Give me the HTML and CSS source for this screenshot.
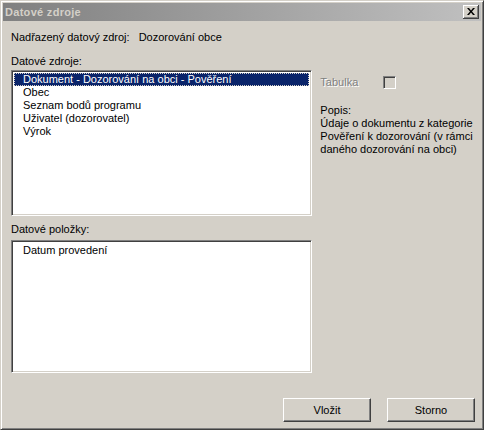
FILE: index.html
```html
<!DOCTYPE html>
<html lang="cs">

<head>
    <meta charset="UTF-8">
    <title>Datové zdroje</title>
    <link rel="stylesheet" href="styles.css">
</head>

<body>
    <div class="window">
        <div class="titlebar">
            <span class="title">Datové zdroje</span>
            <button class="close">
                <svg width="8" height="7" viewBox="0 0 8 7">
                    <path d="M0 0h2l2 2.5 2-2.5h2l-3 3.5 3 3.5h-2l-2-2.5-2 2.5h-2l3-3.5z" fill="#000" />
                </svg>
            </button>
        </div>
        <div class="content">
            <div class="parent">
                <span>Nadřazený datový zdroj:</span>
                <span class="parent-name">Dozorování obce</span>
            </div>
            <div class="main">
                <div class="left">
                    <div class="label">Datové zdroje:</div>
                    <div class="listbox sources">
                        <div class="item selected">Dokument - Dozorování na obci - Pověření</div>
                        <div class="item">Obec</div>
                        <div class="item">Seznam bodů programu</div>
                        <div class="item">Uživatel (dozorovatel)</div>
                        <div class="item">Výrok</div>
                    </div>
                    <div class="label second">Datové položky:</div>
                    <div class="listbox fields">
                        <div class="item">Datum provedení</div>
                    </div>
                </div>
                <div class="right">
                    <div class="table-row">
                        <span class="disabled">Tabulka</span>
                        <span class="checkbox"></span>
                    </div>
                    <div class="desc">
                        <div>Popis:</div>
                        <div>Údaje o dokumentu z kategorie Pověření k dozorování (v rámci daného dozorování na obci)</div>
                    </div>
                </div>
            </div>
            <div class="buttons">
                <button class="btn">Vložit</button>
                <button class="btn">Storno</button>
            </div>
        </div>
    </div>
</body>

</html>
```

FILE: styles.css
```css
* {
    margin: 0;
    padding: 0;
    box-sizing: border-box;
}

body {
    background-color: #d4d0c8;
    font-family: "Liberation Sans", Arial, sans-serif;
    font-size: 11px;
    line-height: 13px;
    color: #000;
}

.window {
    width: 484px;
    height: 430px;
    background-color: #d4d0c8;
    border-top: 1px solid #d4d0c8;
    border-left: 1px solid #d4d0c8;
    border-right: 1px solid #404040;
    border-bottom: 1px solid #404040;
    box-shadow: inset 1px 1px 0 #fff, inset -1px -1px 0 #808080;
    padding: 2px;
}

.titlebar {
    height: 18px;
    background: linear-gradient(to right, #808080, #c0c0c0);
    display: flex;
    align-items: center;
    justify-content: space-between;
    padding: 0 2px 0 2px;
}

.title {
    color: #d4d0c8;
    font-weight: bold;
    letter-spacing: 0.3px;
}

.close {
    width: 16px;
    height: 14px;
    background-color: #d4d0c8;
    border: none;
    box-shadow: inset -1px -1px 0 #404040, inset 1px 1px 0 #fff, inset -2px -2px 0 #808080;
    display: flex;
    align-items: center;
    justify-content: center;
    padding-bottom: 1px;
}

.content {
    padding: 10px 6px 0 8px;
}

.parent {
    display: flex;
    gap: 9px;
}

.main {
    display: flex;
    gap: 8px;
    margin-top: 11px;
}

.left {
    width: 304px;
}

.label.second {
    margin-top: 7px;
}

.listbox {
    margin-top: 2px;
    background-color: #fff;
    border-top: 1px solid #808080;
    border-left: 1px solid #808080;
    border-right: 1px solid #fff;
    border-bottom: 1px solid #fff;
    box-shadow: inset 1px 1px 0 #404040, inset -1px -1px 0 #d4d0c8;
    padding: 2px 2px;
}

.listbox.sources {
    height: 146px;
}

.listbox.fields {
    height: 133px;
    margin-top: 4px;
    padding-top: 3px;
}

.item {
    height: 13px;
    padding-left: 9px;
    white-space: nowrap;
}

.item.selected {
    background-color: #0a246a;
    color: #fff;
    outline: 1px dotted #d4d0c8;
    outline-offset: -1px;
}

.right {
    width: 156px;
    padding-top: 21px;
}

.table-row {
    display: flex;
    align-items: center;
    gap: 25px;
    height: 13px;
}

.disabled {
    color: #808080;
    text-shadow: 1px 1px 0 #fff;
}

.checkbox {
    width: 13px;
    height: 13px;
    border-top: 1px solid #808080;
    border-left: 1px solid #808080;
    border-right: 1px solid #fff;
    border-bottom: 1px solid #fff;
    box-shadow: inset 1px 1px 0 #404040, inset -1px -1px 0 #d4d0c8;
}

.desc {
    margin-top: 15px;
}

.buttons {
    display: flex;
    justify-content: flex-end;
    gap: 16px;
    margin-top: 25px;
    padding-right: 0;
}

.btn {
    width: 88px;
    height: 24px;
    background-color: #d4d0c8;
    font-family: "Liberation Sans", Arial, sans-serif;
    font-size: 11px;
    color: #000;
    border-top: 1px solid #fff;
    border-left: 1px solid #fff;
    border-right: 1px solid #404040;
    border-bottom: 1px solid #404040;
    box-shadow: inset -1px -1px 0 #808080;
}
```
